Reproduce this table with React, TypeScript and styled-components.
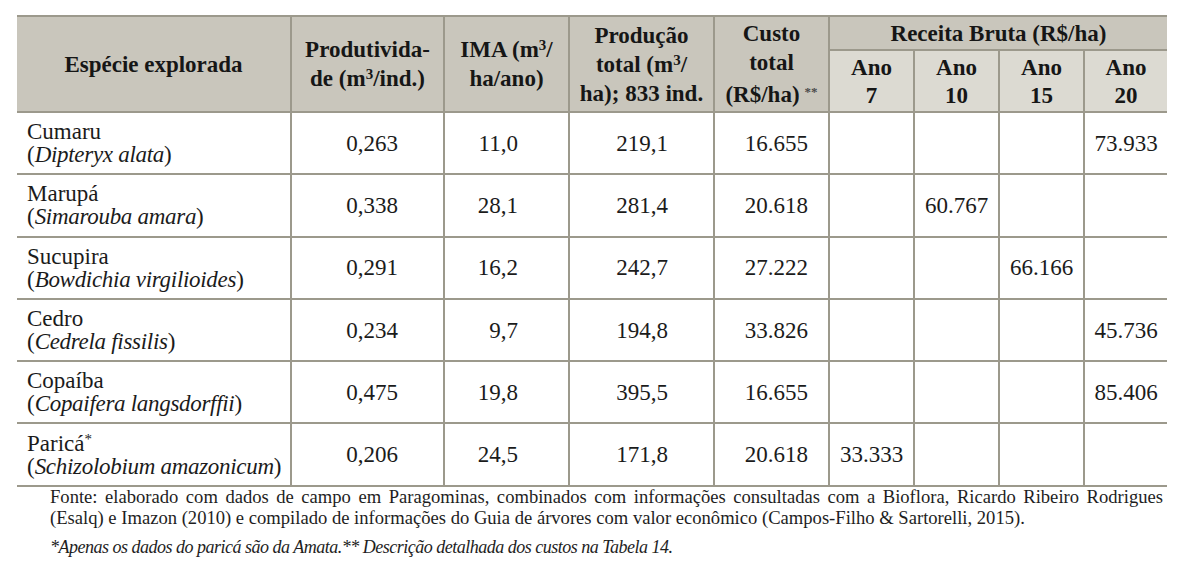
import React from "react";
import styled, { createGlobalStyle, css } from "styled-components";

const serif = css`
  font-family: "Liberation Serif", "Times New Roman", serif;
`;

const Global = createGlobalStyle`
  html, body { margin: 0; padding: 0; background: #ffffff; }
  body { font-family: "Liberation Serif", "Times New Roman", serif; color: #1b1b1b; }
`;

const Page = styled.div`
  ${serif};
  padding: 15px 14px 0 17px;
  width: 1150px;
`;

const Grid = styled.div`
  ${serif};
  display: grid;
  grid-template-columns: 273px 153px 125px 145px 115px 85px 85px 85px 84px;
  grid-template-rows: 32px 62px;
  grid-auto-rows: 62.3px;
  border-top: 2px solid #9c998c;
  border-bottom: 2px solid #9c998c;
  box-sizing: border-box;
`;

const Cell = styled.div<{ $first?: boolean; $top?: boolean }>`
  ${serif};
  box-sizing: border-box;
  display: flex;
  align-items: center;
  border-left: ${(p) => (p.$first ? "none" : "2px solid #9c998c")};
  border-top: ${(p) => (p.$top ? "2px solid #9c998c" : "none")};
  color: #1b1b1b;
`;

const HeadCell = styled(Cell)<{ $span?: number; $rows?: number; $light?: boolean }>`
  grid-column: ${(p) => (p.$span ? `span ${p.$span}` : "auto")};
  grid-row: ${(p) => (p.$rows ? `span ${p.$rows}` : "auto")};
  background: ${(p) => (p.$light ? "#dcdad2" : "#c9c6bc")};
  justify-content: center;
  text-align: center;
  font-weight: bold;
  font-size: 23px;
  line-height: 29px;
  color: #161616;
`;

const HeadText = styled.span`
  ${serif};
  display: block;
  white-space: nowrap;
`;

const YearCell = styled(HeadCell)`
  line-height: 28px;
  padding-top: 2px;
`;

const Stars = styled.span`
  ${serif};
  font-size: 13px;
  color: #4a4a4a;
  vertical-align: 6px;
  margin-left: 5px;
`;

const NameCell = styled(Cell)`
  flex-direction: column;
  align-items: flex-start;
  justify-content: center;
  padding-left: 10px;
  font-size: 23px;
  line-height: 23px;
  white-space: nowrap;
`;

const Line = styled.span`
  ${serif};
  display: block;
`;

const Latin = styled.em`
  ${serif};
  font-style: italic;
  letter-spacing: -0.3px;
`;

const Sup = styled.span`
  ${serif};
  font-size: 15px;
  vertical-align: 7px;
  line-height: 0;
`;

const ValueCell = styled(Cell)<{ $pad?: number; $center?: boolean }>`
  justify-content: ${(p) => (p.$center ? "center" : "flex-end")};
  padding-right: ${(p) => (p.$center ? 0 : p.$pad ?? 0)}px;
  font-size: 23px;
  line-height: 23px;
`;

const Footer = styled.div`
  ${serif};
  padding-left: 33px;
  color: #1e1e1e;
`;

const Source = styled.p`
  ${serif};
  width: 1113px;
  margin: -1px 0 0 0;
  font-size: 18.6px;
  line-height: 21px;
  text-align: justify;
`;

const Note = styled.p`
  ${serif};
  margin: 9px 0 0 0;
  font-size: 18px;
  line-height: 21px;
  font-style: italic;
  letter-spacing: -0.5px;
  white-space: nowrap;
`;

type Row = {
  name: string;
  latin: string;
  star?: boolean;
  prod: string;
  ima: string;
  total: string;
  custo: string;
  years: [string, string, string, string];
};

const rows: Row[] = [
  { name: "Cumaru", latin: "Dipteryx alata", prod: "0,263", ima: "11,0", total: "219,1", custo: "16.655", years: ["", "", "", "73.933"] },
  { name: "Marupá", latin: "Simarouba amara", prod: "0,338", ima: "28,1", total: "281,4", custo: "20.618", years: ["", "60.767", "", ""] },
  { name: "Sucupira", latin: "Bowdichia virgilioides", prod: "0,291", ima: "16,2", total: "242,7", custo: "27.222", years: ["", "", "66.166", ""] },
  { name: "Cedro", latin: "Cedrela fissilis", prod: "0,234", ima: "9,7", total: "194,8", custo: "33.826", years: ["", "", "", "45.736"] },
  { name: "Copaíba", latin: "Copaifera langsdorffii", prod: "0,475", ima: "19,8", total: "395,5", custo: "16.655", years: ["", "", "", "85.406"] },
  { name: "Paricá", latin: "Schizolobium amazonicum", star: true, prod: "0,206", ima: "24,5", total: "171,8", custo: "20.618", years: ["33.333", "", "", ""] },
];

export default function App() {
  return (
    <Page>
      <Global />
      <Grid>
        <HeadCell $first $rows={2}>
          <HeadText>Espécie explorada</HeadText>
        </HeadCell>
        <HeadCell $rows={2}>
          <HeadText>
            Produtivida-
            <br />
            de (m<Sup>3</Sup>/ind.)
          </HeadText>
        </HeadCell>
        <HeadCell $rows={2}>
          <HeadText>
            IMA (m<Sup>3</Sup>/
            <br />
            ha/ano)
          </HeadText>
        </HeadCell>
        <HeadCell $rows={2}>
          <HeadText>
            Produção
            <br />
            total (m<Sup>3</Sup>/
            <br />
            ha); 833 ind.
          </HeadText>
        </HeadCell>
        <HeadCell $rows={2}>
          <HeadText>
            Custo
            <br />
            total
            <br />
            (R$/ha)<Stars>**</Stars>
          </HeadText>
        </HeadCell>
        <HeadCell $span={4}>
          <HeadText>Receita Bruta (R$/ha)</HeadText>
        </HeadCell>
        {["7", "10", "15", "20"].map((y) => (
          <YearCell key={y} $top $light>
            <HeadText>
              Ano
              <br />
              {y}
            </HeadText>
          </YearCell>
        ))}
        {rows.map((r) => (
          <React.Fragment key={r.name}>
            <NameCell $first $top>
              <Line>
                {r.name}
                {r.star && <Sup>*</Sup>}
              </Line>
              <Line>
                (<Latin>{r.latin}</Latin>)
              </Line>
            </NameCell>
            <ValueCell $top $pad={45}>{r.prod}</ValueCell>
            <ValueCell $top $pad={50}>{r.ima}</ValueCell>
            <ValueCell $top $pad={45}>{r.total}</ValueCell>
            <ValueCell $top $pad={20}>{r.custo}</ValueCell>
            {r.years.map((v, i) => (
              <ValueCell key={i} $top $center>{v}</ValueCell>
            ))}
          </React.Fragment>
        ))}
      </Grid>
      <Footer>
        <Source>
          Fonte: elaborado com dados de campo em Paragominas, combinados com informações consultadas com a Bioflora, Ricardo Ribeiro Rodrigues (Esalq) e Imazon (2010) e compilado de informações do Guia de árvores com valor econômico (Campos-Filho &amp; Sartorelli, 2015).
        </Source>
        <Note>*Apenas os dados do paricá são da Amata.** Descrição detalhada dos custos na Tabela 14.</Note>
      </Footer>
    </Page>
  );
}
